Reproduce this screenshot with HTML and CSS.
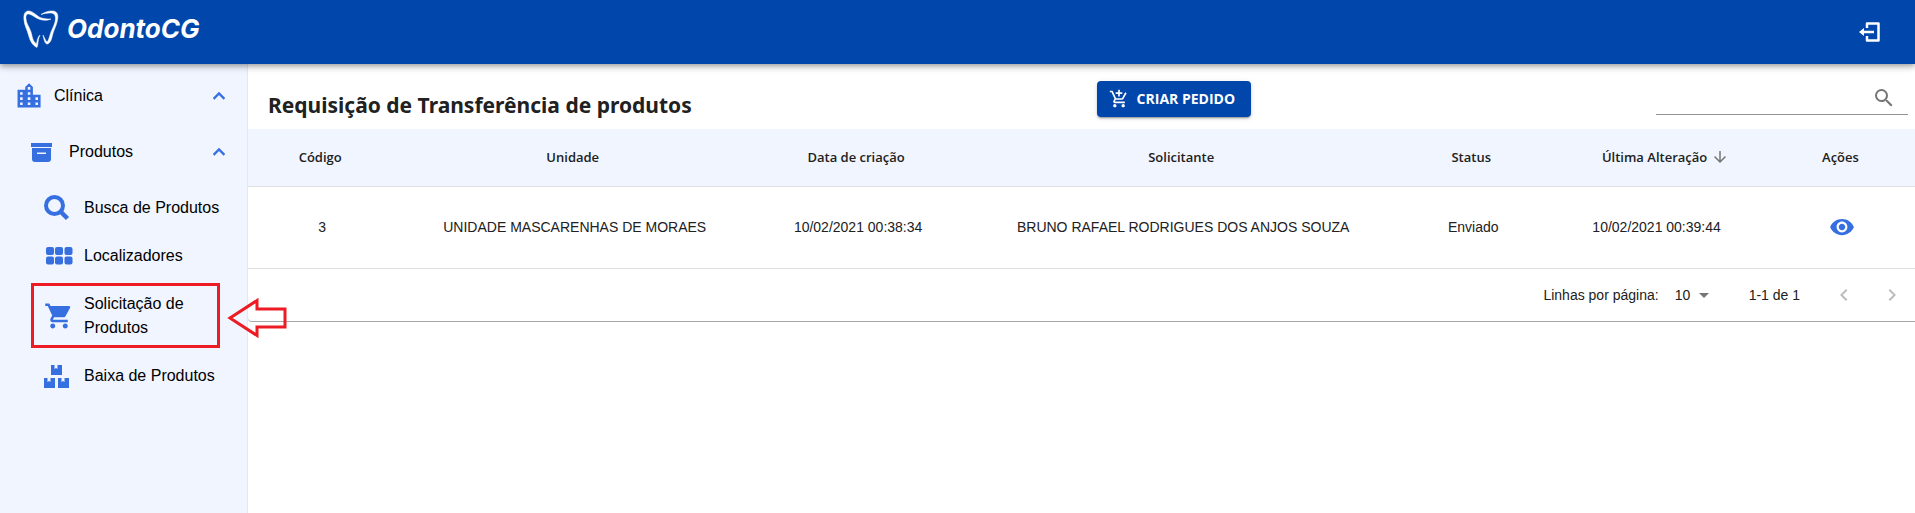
FILE: index.html
```html
<!DOCTYPE html>
<html lang="pt-BR">
<head>
<meta charset="utf-8">
<title>OdontoCG</title>
<link rel="stylesheet" href="styles.css">
</head>
<body>
<header class="topbar">
  <a class="brand" href="#">
    <svg class="brand-tooth" viewBox="0 0 36 38" aria-hidden="true">
      <path d="M17 7.500C13 5 9 .500 5 1 1.500 1.500.500 5 1 10c.500 6 3 9 4.500 15 1 4 3 10 8.500 12.500 1.500-3 .500-8 3-12.500-2.500 2-3 6-3.500 9C9.500 31 9.500 27 8 22 6 16 3.500 14 3 9 2.500 5 4 3.500 6 4c3.500 1 6.500 4 11 5.500 4 1.300 8 1 11-.500-4 0-7.500-.200-11-1.500z" stroke="#fff" stroke-width=".5"/>
      <path d="M18 4.500C22 2 26 .500 30 1c4.500.500 5.500 4 4.500 9-1 6-3.500 9-5 15-.800 4-2 8-5 9-2.500.300-3.500-4-4.500-9 1.500 2.500 2.500 6 4 7 2-2 2.500-6 4-10 2-5 4.500-9 4.500-13.500C32.500 4 30 3 27 3c-3 0-6 .500-9 1.500z" stroke="#fff" stroke-width=".5"/>
    </svg>
    <span class="brand-name">OdontoCG</span>
  </a>
  <button class="icon-button" type="button" aria-label="Sair">
    <svg class="icon-logout" viewBox="0 0 22 20" aria-hidden="true"><path d="M8 6V1.500h11.500v17H8V14" fill="none" stroke="#fff" stroke-width="2.500" stroke-linejoin="round"/><path d="M4 10h11" stroke="#fff" stroke-width="2.500"/><path d="M0 10l5-4v8z" fill="#fff"/></svg>
  </button>
</header>
<div class="layout">
  <nav class="sidebar">
    <button class="nav-item nav-group" type="button" aria-expanded="true">
      <svg class="icon-24" viewBox="0 0 24 24" aria-hidden="true"><path d="M15 11V5l-3-3-3 3v2H3v14h18V11h-6zm-8 8H5v-2h2v2zm0-4H5v-2h2v2zm0-4H5V9h2v2zm6 8h-2v-2h2v2zm0-4h-2v-2h2v2zm0-4h-2V9h2v2zm0-4h-2V5h2v2zm6 12h-2v-2h2v2zm0-4h-2v-2h2v2z" transform="translate(-3.300 -3.300) scale(1.280)"/></svg>
      <span class="nav-label">Clínica</span>
      <svg class="icon-24" viewBox="0 0 24 24" aria-hidden="true"><path d="M12 8l-6 6 1.410 1.410L12 10.830l4.590 4.580L18 14z" stroke="currentColor" stroke-width=".5"/></svg>
    </button>
    <button class="nav-item nav-subgroup" type="button" aria-expanded="true">
      <svg class="icon-24" viewBox="0 0 24 24" aria-hidden="true"><path d="M1 3h21v4H1zM2 8h19v11a3 3 0 0 1-3 3H5a3 3 0 0 1-3-3zm5 4.500v1.500h9v-1.500z" fill-rule="evenodd"/></svg>
      <span class="nav-label">Produtos</span>
      <svg class="icon-24" viewBox="0 0 24 24" aria-hidden="true"><path d="M12 8l-6 6 1.410 1.410L12 10.830l4.590 4.580L18 14z" stroke="currentColor" stroke-width=".5"/></svg>
    </button>
    <ul class="nav-list">
      <li><a class="nav-item nav-leaf" href="#">
        <svg class="icon-26" viewBox="0 0 26 26" aria-hidden="true"><circle cx="10.500" cy="10.500" r="8.500" fill="none" stroke="#366fe0" stroke-width="4"/><path d="M16.500 16.500l7 7" stroke="#366fe0" stroke-width="4.500"/></svg>
        <span class="nav-label">Busca de Produtos</span></a></li>
      <li><a class="nav-item nav-leaf" href="#">
        <svg class="icon-26" viewBox="0 0 26 26" aria-hidden="true"><rect x="2" y="4" width="8" height="8" rx="2"/><rect x="11" y="4" width="8" height="8" rx="2"/><rect x="20.500" y="4" width="8" height="8" rx="2"/><rect x="2" y="13.500" width="8" height="8" rx="2"/><rect x="11" y="13.500" width="8" height="8" rx="2"/><rect x="20.500" y="13.500" width="8" height="8" rx="2"/></svg>
        <span class="nav-label">Localizadores</span></a></li>
      <li><a class="nav-item nav-leaf nav-highlight" href="#" aria-current="page">
        <svg class="icon-26" viewBox="0 0 26 26" aria-hidden="true"><path d="M7 18c-1.100 0-1.990.900-1.990 2S5.900 22 7 22s2-.900 2-2-.900-2-2-2zM1 2v2h2l3.600 7.590-1.350 2.450c-.160.280-.250.610-.250.960 0 1.100.900 2 2 2h12v-2H7.420c-.140 0-.250-.110-.250-.250l.030-.120.900-1.630h7.450c.750 0 1.410-.410 1.750-1.030l3.580-6.490A1 1 0 0 0 20 4H5.210l-.940-2H1zm16 16c-1.100 0-1.990.900-1.990 2s.890 2 1.990 2 2-.900 2-2-.900-2-2-2z" transform="translate(0 -2) scale(1.250)"/></svg>
        <span class="nav-label">Solicitação de Produtos</span></a>
        <svg class="pointer-arrow" viewBox="0 0 60 40" aria-hidden="true"><path d="M2 20L29 2.500V11h28v18H29v8.500z" fill="none" stroke="#ed1c24" stroke-width="3"/></svg></li>
      <li><a class="nav-item nav-leaf" href="#">
        <svg class="icon-26" viewBox="0 0 26 26" aria-hidden="true"><path d="M7 2h3.500v4l1.500-1 1.500 1V2H18v10H7zM0 15h3.500v4L5 18l1.500 1v-4H11v10H0zM14 15h3.500v4l1.500-1 1.500 1v-4H25v10H14z"/></svg>
        <span class="nav-label">Baixa de Produtos</span></a></li>
    </ul>
  </nav>
  <main class="content">
    <div class="toolbar">
      <h1 class="title">Requisição de Transferência de produtos</h1>
      <button class="create-button" type="button">
        <svg class="icon-20" viewBox="0 0 24 24" aria-hidden="true"><path d="M11 9h2V6h3V4h-3V1h-2v3H8v2h3v3zm-4 9c-1.100 0-1.990.900-1.990 2S5.900 22 7 22s2-.900 2-2-.900-2-2-2zm10 0c-1.100 0-1.990.900-1.990 2s.890 2 1.990 2 2-.900 2-2-.900-2-2-2zm-9.830-3.250l.030-.120.900-1.630h7.450c.750 0 1.410-.410 1.750-1.030l3.860-7.010L19.420 4h-.010l-1.100 2-2.760 5H8.530l-.130-.270L6.160 6l-.950-2-.940-2H1v2h2l3.600 7.590-1.350 2.450c-.160.280-.250.610-.250.960 0 1.100.900 2 2 2h12v-2H7.420c-.130 0-.250-.110-.250-.250z"/></svg>
        <span>CRIAR PEDIDO</span>
      </button>
      <label class="search">
        <input class="search-input" type="text" aria-label="Pesquisar">
        <svg class="icon-24" viewBox="0 0 24 24" aria-hidden="true"><path d="M15.500 14h-.790l-.280-.270A6.470 6.470 0 0 0 16 9.500 6.500 6.500 0 1 0 9.500 16c1.610 0 3.090-.590 4.230-1.570l.270.280v.790l5 4.990L20.490 19l-4.990-5zm-6 0C7.010 14 5 11.990 5 9.500S7.010 5 9.500 5 14 7.010 14 9.500 11.990 14 9.500 14z"/></svg>
      </label>
    </div>
    <table class="orders">
      <colgroup><col class="col-code"><col class="col-unit"><col class="col-created"><col class="col-person"><col class="col-status"><col class="col-changed"><col class="col-actions"></colgroup>
      <thead>
        <tr><th>Código</th><th>Unidade</th><th>Data de criação</th><th>Solicitante</th><th>Status</th>
          <th aria-sort="descending"><span class="sort-label">Última Alteração<svg class="sort-icon" viewBox="0 0 24 24" aria-hidden="true"><path d="M20 12l-1.410-1.410L13 16.170V4h-2v12.170l-5.580-5.590L4 12l8 8 8-8z"/></svg></span></th><th>Ações</th></tr>
      </thead>
      <tbody>
        <tr><td>3</td><td>UNIDADE MASCARENHAS DE MORAES</td><td>10/02/2021 00:38:34</td><td>BRUNO RAFAEL RODRIGUES DOS ANJOS SOUZA</td><td>Enviado</td><td>10/02/2021 00:39:44</td>
          <td><button class="icon-button view-button" type="button" aria-label="Visualizar"><svg class="icon-26" viewBox="0 0 24 24" aria-hidden="true"><path d="M12 4.500C7 4.500 2.730 7.610 1 12c1.730 4.390 6 7.500 11 7.500s9.270-3.110 11-7.500c-1.730-4.390-6-7.500-11-7.500zM12 17c-2.760 0-5-2.240-5-5s2.240-5 5-5 5 2.240 5 5-2.240 5-5 5zm0-8c-1.660 0-3 1.340-3 3s1.340 3 3 3 3-1.340 3-3-1.340-3-3-3z"/></svg></button></td></tr>
      </tbody>
    </table>
    <div class="pagination">
      <label for="rows">Linhas por página:</label>
      <span class="rows-field">
        <select class="rows-select" id="rows"><option>10</option><option>20</option><option>50</option></select>
        <svg class="rows-caret" viewBox="0 0 10 5" aria-hidden="true"><path d="M0 0l5 5 5-5z"/></svg>
      </span>
      <span class="range">1-1 de 1</span>
      <span class="pager">
        <button class="icon-button pager-button" type="button" disabled aria-label="Página anterior"><svg class="icon-24" viewBox="0 0 24 24" aria-hidden="true"><path d="M15.410 7.410L14 6l-6 6 6 6 1.410-1.410L10.830 12z"/></svg></button>
        <button class="icon-button pager-button" type="button" disabled aria-label="Próxima página"><svg class="icon-24" viewBox="0 0 24 24" aria-hidden="true"><path d="M10 6L8.590 7.410 13.170 12l-4.580 4.590L10 18l6-6z"/></svg></button>
      </span>
    </div>
  </main>
</div>
</body>
</html>
```
FILE: styles.css
```css
* { box-sizing: border-box; }
body {
  margin: 0;
  min-height: 100vh;
  display: flex;
  flex-direction: column;
  background: #fff;
  color: #212121;
  font: 14px/20px "Liberation Sans", Arial, sans-serif;
}
button { font: inherit; border: 0; background: none; padding: 0; color: inherit; cursor: pointer; }
svg { display: block; flex: none; fill: currentColor; overflow: visible; }
.icon-20 { width: 20px; height: 20px; }
.icon-24 { width: 24px; height: 24px; }
.icon-26 { width: 26px; height: 26px; }
.icon-logout { width: 22px; height: 20px; }

.topbar {
  position: relative;
  z-index: 2;
  display: flex;
  align-items: center;
  justify-content: space-between;
  height: 64px;
  padding: 0 34px 0 23px;
  background: #0046ab;
  color: #fff;
  box-shadow: 0 2px 4px -1px rgba(0,0,0,.2), 0 4px 5px rgba(0,0,0,.14), 0 1px 10px rgba(0,0,0,.12);
}
.brand { display: flex; align-items: center; gap: 8px; padding-bottom: 6px; color: #fff; text-decoration: none; }
.brand-tooth { width: 36px; height: 38px; }
.brand-name { font: italic 700 26px/32px Inter, sans-serif; }
.icon-button { display: inline-flex; align-items: center; justify-content: center; }

.layout { flex: 1; display: flex; }
.sidebar {
  position: relative;
  z-index: 1;
  flex: none;
  width: 248px;
  padding-top: 4px;
  background: #f0f5ff;
  border-right: 1px solid #e4e8f2;
  color: #366fe0;
}
.nav-item {
  display: flex;
  align-items: center;
  width: 100%;
  text-align: left;
  text-decoration: none;
  font-size: 16px;
  line-height: 24px;
  color: inherit;
}
.nav-label { flex: 1; color: #000; }
.nav-group { padding: 16px 16px 16px 17px; gap: 13px; }
.nav-subgroup { padding: 16px 16px 16px 30px; gap: 15px; }
.nav-list { list-style: none; margin: 0; padding: 4px 0 0; }
.nav-list li { position: relative; }
.nav-leaf { padding: 12px 20px 12px 44px; gap: 14px; min-height: 48px; }
.nav-leaf .icon-26 { margin: -1px 0; }
.nav-highlight::after {
  content: "";
  position: absolute;
  top: 3px;
  bottom: 4px;
  left: 31px;
  right: 27px;
  border: 3px solid #ed1c24;
}
.pointer-arrow { position: absolute; left: 228px; top: 18px; width: 60px; height: 40px; }

.content { flex: 1; min-width: 0; }
.toolbar {
  display: flex;
  align-items: center;
  justify-content: space-between;
  height: 65px;
  padding: 0 7px 0 20px;
}
.title { margin: 0; padding-top: 16px; font: 700 21px/30px "Noto Sans", sans-serif; white-space: nowrap; }
.create-button {
  display: flex;
  align-items: center;
  gap: 8px;
  height: 36px;
  margin-top: 5px;
  padding: 0 16px 0 12px;
  border-radius: 4px;
  background: #0046ab;
  color: #fff;
  font: 700 14px/24px "Open Sans", sans-serif;
  box-shadow: 0 3px 1px -2px rgba(0,0,0,.2), 0 2px 2px rgba(0,0,0,.14), 0 1px 5px rgba(0,0,0,.12);
}
.search {
  display: flex;
  align-items: center;
  width: 252px;
  height: 33px;
  margin-top: 4px;
  padding-right: 12px;
  border-bottom: 1px solid #949494;
  color: #757575;
}
.search-input { flex: 1; min-width: 0; height: 24px; border: 0; outline: 0; background: none; font: inherit; }

.orders { width: 100%; table-layout: fixed; border-collapse: collapse; text-align: center; }
.col-code { width: 8.9%; }
.col-unit { width: 21.4%; }
.col-created { width: 12.6%; }
.col-person { width: 26.4%; }
.col-status { width: 8.4%; }
.col-changed { width: 13.6%; }
.col-actions { width: 8.7%; }
.orders th { height: 57px; padding: 0 4px 0 0; background: #f0f5ff; border-bottom: 1px solid #e0e0e0; font: 600 13px/20px "Open Sans", sans-serif; }
.orders td { height: 82px; padding: 0; border-bottom: 1px solid #e0e0e0; }
.sort-label { display: inline-flex; align-items: center; }
.sort-icon { width: 18px; height: 18px; margin: 0 -22px 0 4px; color: #757575; }
.view-button { color: #366fe0; vertical-align: middle; }

.pagination {
  display: flex;
  align-items: center;
  justify-content: flex-end;
  height: 53px;
  padding-right: 11px;
  border-bottom: 1px solid #a5a8a6;
  border-bottom-left-radius: 4px;
}
.rows-field { position: relative; margin-left: 16px; }
.rows-select { appearance: none; width: 34px; height: 24px; padding: 0; border: 0; background: none; color: inherit; font: inherit; }
.rows-caret { position: absolute; right: 0; top: 10px; width: 10px; height: 5px; color: #757575; pointer-events: none; }
.range { margin-left: 40px; }
.pager { display: flex; gap: 24px; margin-left: 32px; }
.pager-button { color: #bdbdbd; }
```
